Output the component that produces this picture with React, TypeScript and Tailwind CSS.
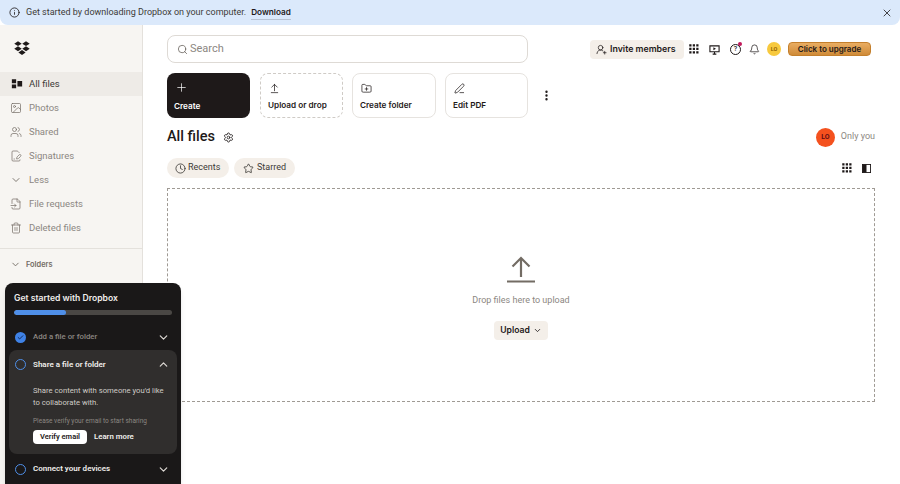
import React from 'react';
import {
  ArrowUpFromLine,
  ChevronDown,
  ChevronUp,
  Check,
  Clock,
  Star,
  Search,
  X,
  Plus,
  FolderPlus,
  PenLine,
  MoreVertical,
  Settings,
  Bell,
  UserRoundPlus,
  Info,
  Image,
  Users,
  FileSignature,
  FileInput,
  Trash2,
} from 'lucide-react';

const font = { fontFamily: 'Roboto, "Liberation Sans", sans-serif' };
const labelFont = { fontFamily: 'Inter, "Liberation Sans", sans-serif' };

const DropboxLogo: React.FC = () => (
  <svg width="16" height="15" viewBox="0 0 24 22" fill="#1e1919">
    <path d="M6 .2 11.6 3.8 6 7.4.4 3.8Z" />
    <path d="M18 .2 23.6 3.8 18 7.4 12.4 3.8Z" />
    <path d="M6 7.8 11.6 11.4 6 15 .4 11.4Z" />
    <path d="M18 7.8 23.6 11.4 18 15 12.4 11.4Z" />
    <path d="M12 13.4 17.4 17 12 20.8 6.6 17Z" />
  </svg>
);

const AllFilesIcon: React.FC = () => (
  <svg width="12" height="12" viewBox="0 0 14 14" fill="#1e1919">
    <path d="M1 1.5h5v4.5H1zM1 7.5h5V12H1zM7.5 3.5H13v6.5H7.5z" />
  </svg>
);

const DotGrid: React.FC<{ className?: string }> = ({ className }) => (
  <svg className={className} width="10" height="10" viewBox="0 0 10 10" fill="#1e1919">
    {[0.25, 3.75, 7.25].flatMap((y) =>
      [0.25, 3.75, 7.25].map((x) => <rect key={`${x}-${y}`} x={x} y={y} width="2.25" height="2.25" />)
    )}
  </svg>
);

const navItems = [
  { label: 'Photos', icon: <Image size={12} strokeWidth={1.4} /> },
  { label: 'Shared', icon: <Users size={12} strokeWidth={1.4} /> },
  { label: 'Signatures', icon: <FileSignature size={12} strokeWidth={1.4} /> },
  { label: 'Less', icon: <ChevronDown size={12} strokeWidth={1.8} /> },
  { label: 'File requests', icon: <FileInput size={12} strokeWidth={1.4} /> },
  { label: 'Deleted files', icon: <Trash2 size={12} strokeWidth={1.4} /> },
];

const ActionCard: React.FC<{
  label: string;
  icon: React.ReactNode;
  dashed?: boolean;
  dark?: boolean;
  className?: string;
}> = ({ label, icon, dashed, dark, className }) => (
  <div
    style={labelFont}
    className={`h-[45px] rounded-lg flex flex-col justify-between pl-[7px] pt-[6px] pb-[6px] text-[8.2px] font-semibold leading-3 ${
      dark
        ? 'bg-[#1e1919] text-white'
        : dashed
        ? 'border border-dashed border-[#cfcbc6] text-[#1e1919]'
        : 'border border-[#e6e3df] text-[#1e1919]'
    } ${className}`}
  >
    <div className="h-4 flex items-center pl-px">{icon}</div>
    <span>{label}</span>
  </div>
);

const App: React.FC = () => (
  <div className="relative w-[900px] h-[484px] overflow-hidden bg-white text-[#1e1919]" style={font}>
    {/* Banner */}
    <div className="h-[25px] bg-[#dbe9fb] rounded-b-lg flex items-center pl-[9px] pr-[7px]">
      <Info size={11} strokeWidth={1.8} className="mr-[6px]" />
      <span className="text-[9px] text-[#3d3a37]">Get started by downloading Dropbox on your computer.</span>
      <span style={labelFont} className="ml-[5px] text-[8.2px] font-semibold border-b border-[#b9c4d4] leading-[14px]">
        Download
      </span>
      <X size={12} strokeWidth={1.6} className="ml-auto" />
    </div>

    <div className="flex h-[459px]">
      {/* Sidebar */}
      <aside className="w-[143px] shrink-0 bg-[#f7f5f2] border-r border-[#e4e1dc] flex flex-col">
        <div className="h-[47px] pl-[14px] pt-[16px] flex items-start">
          <DropboxLogo />
        </div>
        <div className="h-6 bg-[#eeebe7] flex items-center pl-[11px] gap-[6px] text-[9.5px] text-[#3d3a37]">
          <AllFilesIcon />
          <span>All files</span>
        </div>
        {navItems.map((item) => (
          <div key={item.label} className="h-6 flex items-center pl-[9px] gap-[6px] text-[9.5px] text-[#8c8782]">
            <span className="w-[14px] flex justify-center text-[#736c64]">{item.icon}</span>
            <span>{item.label}</span>
          </div>
        ))}
        <div
          style={labelFont}
          className="mt-2 border-t border-[#e4e1dc] pt-[10px] pl-[10px] flex items-center gap-[5px] text-[7.4px] font-semibold text-[#736c64]"
        >
          <ChevronDown size={11} strokeWidth={2} />
          <span>Folders</span>
        </div>
      </aside>

      {/* Main */}
      <main className="flex-1 pl-6 pr-[25px] pt-[10px]">
        <div className="flex items-center h-[28px]">
          <div className="w-[361px] h-[28px] border border-[#dedad5] rounded-lg flex items-center pl-[9px] gap-[2px]">
            <Search size={11} strokeWidth={1.6} className="text-[#5c5650]" />
            <span className="text-[11px] text-[#8c8782]">Search</span>
          </div>
          <div className="ml-[62px] w-[94px] h-[19px] bg-[#f4efe9] rounded flex items-center pl-[6px] gap-[3px]">
            <UserRoundPlus size={11} strokeWidth={1.6} />
            <span style={labelFont} className="text-[8.8px] font-semibold">
              Invite members
            </span>
          </div>
          <DotGrid className="ml-[5px]" />
          <svg className="ml-[10px]" width="11" height="11" viewBox="0 0 12 12" fill="none" stroke="#1e1919" strokeWidth="1.2">
            <path d="M1 2h10v6.5H1zM6 8.5V11M4 11h4" />
            <path d="M4.8 3.6 7.6 5.2 4.8 6.8z" fill="#1e1919" stroke="none" />
          </svg>
          <span className="relative ml-[10px] w-[11px] h-[11px] rounded-full border border-[#1e1919] flex items-center justify-center text-[7px] font-medium">
            ?
            <span className="absolute -top-[3px] -right-[2px] w-[4px] h-[4px] rounded-full bg-[#c2185b]" />
          </span>
          <Bell size={11} strokeWidth={1.6} className="ml-[8px]" />
          <span className="ml-[7px] w-[14px] h-[14px] rounded-full bg-[#f7c93e] text-[5.5px] font-semibold text-[#8a5a00] flex items-center justify-center">
            LO
          </span>
          <span
            style={labelFont}
            className="ml-[7px] w-[83px] h-[14px] rounded bg-linear-to-b from-[#e9ad62] to-[#cf8b38] border border-[#c47f2c] text-[8px] font-semibold flex items-center justify-center"
          >
            Click to upgrade
          </span>
        </div>

        {/* Action cards */}
        <div className="flex items-center gap-[9px] mt-[10px]">
          <ActionCard dark className="w-[83px] mr-px" label="Create" icon={<Plus size={13} strokeWidth={1.3} />} />
          <ActionCard dashed className="w-[83px]" label="Upload or drop" icon={<ArrowUpFromLine size={11} strokeWidth={1.6} />} />
          <ActionCard className="w-[84px]" label="Create folder" icon={<FolderPlus size={11} strokeWidth={1.6} />} />
          <ActionCard className="w-[83px]" label="Edit PDF" icon={<PenLine size={11} strokeWidth={1.6} />} />
          <MoreVertical size={13} strokeWidth={2.4} className="ml-[3px]" />
        </div>

        {/* Heading */}
        <div className="flex items-center mt-[9px] h-[20px]">
          <h1 className="text-[14.5px] font-medium leading-5">All files</h1>
          <Settings size={11} strokeWidth={1.8} className="ml-[8px]" />
          <span className="ml-auto w-[19px] h-[19px] rounded-full bg-[#f4511e] text-[7px] font-semibold text-[#5c0a12] flex items-center justify-center">
            LO
          </span>
          <span className="ml-[6px] text-[9px] text-[#8c8782]">Only you</span>
        </div>

        {/* Tabs */}
        <div className="flex items-center gap-[5px] mt-[11px] h-[20px]">
          <div className="h-[20px] w-[62px] rounded-full bg-[#f4efe9] flex items-center pl-[8px] gap-[2px] text-[9px] text-[#3d3a37]">
            <Clock size={11} strokeWidth={1.8} />
            <span>Recents</span>
          </div>
          <div className="h-[20px] w-[61px] rounded-full bg-[#f4efe9] flex items-center pl-[9px] gap-[3px] text-[9px] text-[#3d3a37]">
            <Star size={11} strokeWidth={1.8} />
            <span>Starred</span>
          </div>
          <DotGrid className="ml-auto" />
          <svg className="ml-[5px] mr-[4px]" width="9" height="9" viewBox="0 0 10 10">
            <rect x="0.5" y="0.5" width="9" height="9" fill="none" stroke="#1e1919" />
            <rect x="0.5" y="0.5" width="4.5" height="9" fill="#1e1919" />
          </svg>
        </div>

        {/* Drop zone */}
        <div className="mt-[10px] h-[214px] border border-dashed border-[#9f9a94] flex flex-col items-center pt-[65px]">
          <svg width="30" height="30" viewBox="0 0 30 30" fill="none" stroke="#736c64" strokeWidth="2.2">
            <path d="M15 23V4M6.5 12.5 15 4l8.5 8.5M1 27.5h28" />
          </svg>
          <span className="mt-[10px] text-[9px] text-[#8c8782] leading-3">Drop files here to upload</span>
          <div
            style={labelFont}
            className="mt-[15px] h-[19px] w-[54px] rounded bg-[#f4efe9] flex items-center justify-center gap-[3px] text-[8.6px] font-semibold"
          >
            <span>Upload</span>
            <ChevronDown size={9} strokeWidth={2.2} />
          </div>
        </div>
      </main>
    </div>

    {/* Onboarding panel */}
    <div className="absolute left-[5px] top-[283px] w-[176px] h-[201px] bg-[#1a1818] rounded-t-lg pt-[9px] px-[4px] text-white shadow-md">
      <div style={labelFont} className="px-[5px] text-[8.6px] font-semibold leading-3 text-[#f0eeec]">
        Get started with Dropbox
      </div>
      <div className="mx-[5px] mt-[6px] h-[5px] rounded-full bg-[#4a4744] overflow-hidden">
        <div className="h-full w-[52px] rounded-full bg-[#4f8fe8]" />
      </div>
      <div className="flex items-center h-[24px] mt-[10px] pl-[6px] pr-[7px]">
        <span className="w-[11px] h-[11px] rounded-full bg-[#3f82e6] flex items-center justify-center">
          <Check size={7} strokeWidth={3} className="text-[#10204a]" />
        </span>
        <span className="ml-[7px] text-[7.8px] font-medium text-[#8c8782]">Add a file or folder</span>
        <ChevronDown size={13} strokeWidth={2.2} className="ml-auto text-[#dedad5]" />
      </div>
      <div className="mt-[1px] h-[104px] rounded-lg bg-[#302e2d] pl-[6px] pr-[7px]">
        <div className="flex items-center h-[29px]">
          <span className="w-[11px] h-[11px] rounded-full border border-[#4f8fe8]" />
          <span className="ml-[7px] text-[8px] font-semibold text-[#f0eeec]">Share a file or folder</span>
          <ChevronUp size={13} strokeWidth={2.2} className="ml-auto text-[#dedad5]" />
        </div>
        <div className="pl-[18px] mt-[6px] text-[7.7px] leading-3 text-[#cfcbc6]">
          Share content with someone you'd like to collaborate with.
        </div>
        <div className="pl-[18px] mt-[7px] text-[6.5px] leading-[10px] text-[#8c8782]">
          Please verify your email to start sharing
        </div>
        <div className="pl-[18px] mt-[4px] flex items-center gap-[7px]">
          <span className="w-[54px] h-[14px] rounded-sm bg-white text-[#1e1919] text-[7.5px] font-semibold flex items-center justify-center">
            Verify email
          </span>
          <span className="text-[7.8px] font-semibold text-[#f0eeec]">Learn more</span>
        </div>
      </div>
      <div className="flex items-center h-[24px] mt-[3px] pl-[6px] pr-[7px]">
        <span className="w-[11px] h-[11px] rounded-full border border-[#4f8fe8]" />
        <span className="ml-[7px] text-[8px] font-semibold text-[#f0eeec]">Connect your devices</span>
        <ChevronDown size={13} strokeWidth={2.2} className="ml-auto text-[#dedad5]" />
      </div>
    </div>
  </div>
);

export default App;
